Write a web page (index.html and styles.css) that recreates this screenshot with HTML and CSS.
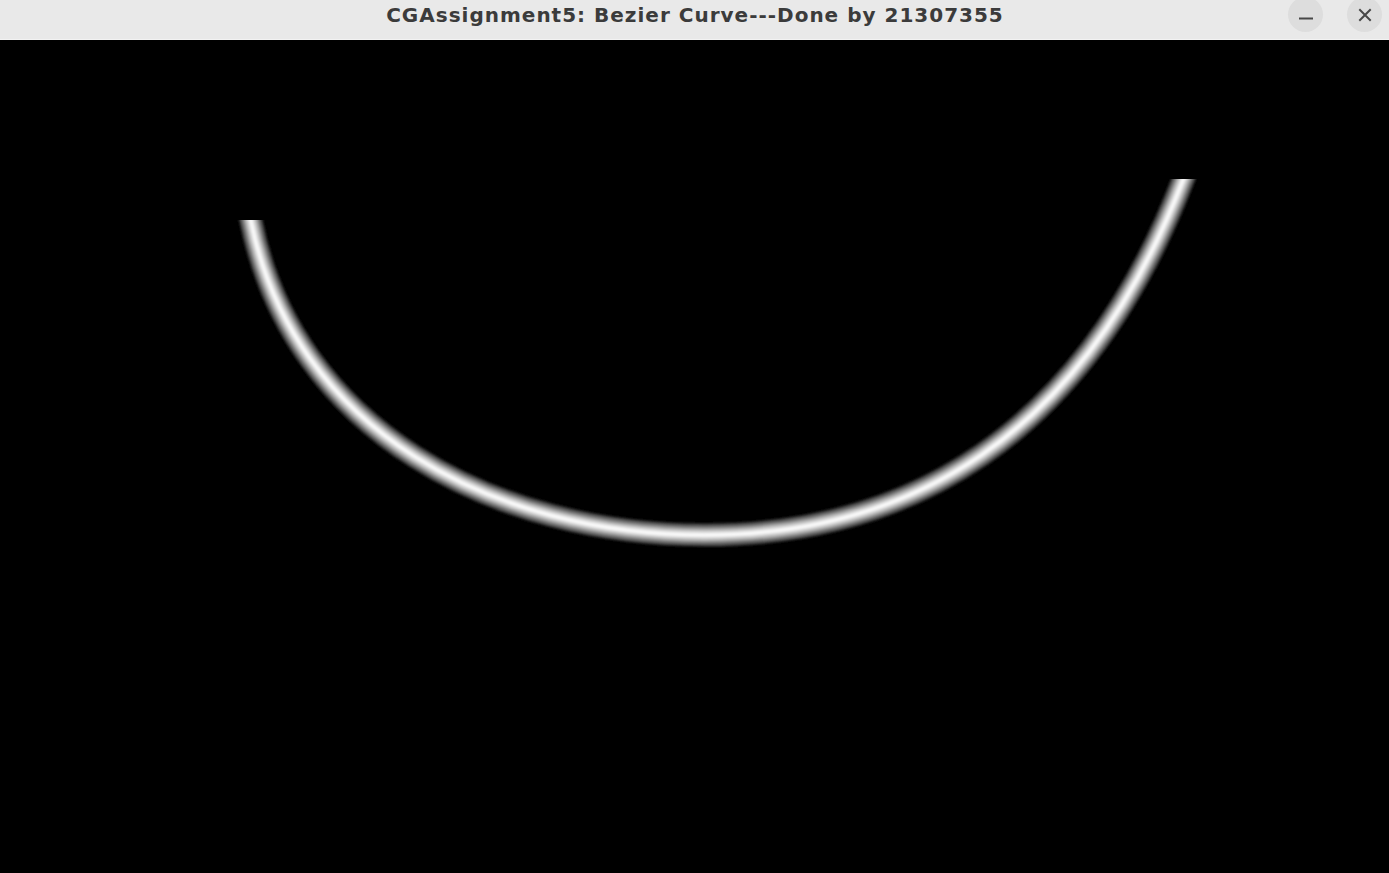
FILE: index.html
```html
<!DOCTYPE html>
<html lang="en">
<head>
<meta charset="utf-8">
<title>CGAssignment5: Bezier Curve---Done by 21307355</title>
<link rel="stylesheet" href="styles.css">
</head>
<body>
<div class="window">
  <header class="titlebar">
    <div class="title">CGAssignment5: Bezier Curve---Done by 21307355</div>
    <div class="controls">
      <button class="ctl" aria-label="Minimize">
        <svg width="14" height="14" viewBox="0 0 14 14"><path class="glyph" d="M1 10.5 H13"/></svg>
      </button>
      <button class="ctl" aria-label="Close">
        <svg width="14" height="14" viewBox="0 0 14 14"><path class="glyph" d="M2 2 L12 12 M12 2 L2 12"/></svg>
      </button>
    </div>
  </header>
  <main class="canvas">
    <svg class="scene" viewBox="0 41 1389 832" width="1389" height="832">
      <defs>
        <path id="curve" d="M 248 207.3 L 251 222 C 293 432 495 536 705 536 C 905 536 1083 441 1183 181 L 1188.4 167"/>
        <clipPath id="ends">
          <polygon points="0,221 700,221 700,180 1389,180 1389,873 0,873"/>
        </clipPath>
        <filter id="soft" x="-5%" y="-5%" width="110%" height="110%">
          <feGaussianBlur stdDeviation="0.8"/>
        </filter>
      </defs>
      <g clip-path="url(#ends)">
        <g class="tube" filter="url(#soft)">
          <use href="#curve" class="l1"/>
          <use href="#curve" class="l2"/>
          <use href="#curve" class="l3"/>
          <use href="#curve" class="l4"/>
          <use href="#curve" class="l5"/>
          <use href="#curve" class="l6"/>
          <use href="#curve" class="l7"/>
          <use href="#curve" class="l8"/>
          <use href="#curve" class="l9"/>
          <use href="#curve" class="l10"/>
          <use href="#curve" class="l11"/>
        </g>
      </g>
    </svg>
  </main>
</div>
</body>
</html>
```

FILE: styles.css
```css
html, body {
  margin: 0;
  padding: 0;
  background: #000;
  overflow: hidden;
}

.window {
  width: 1389px;
  height: 873px;
  display: flex;
  flex-direction: column;
}

.titlebar {
  height: 40px;
  flex: 0 0 40px;
  box-sizing: border-box;
  background: #e9e9e9;
  border-bottom: 1px solid #f3f3f3;
  display: flex;
  align-items: center;
  justify-content: center;
  position: relative;
}

.title {
  font-family: "DejaVu Sans", "Open Sans", sans-serif;
  font-weight: 700;
  font-size: 20px;
  letter-spacing: 1px;
  color: #3b3b3b;
  margin-top: -9px;
  margin-left: 1px;
}

.controls {
  position: absolute;
  right: 7px;
  top: -3px;
  display: flex;
  gap: 24px;
}

.ctl {
  width: 35px;
  height: 35px;
  border-radius: 50%;
  border: none;
  padding: 0;
  background: #dddddd;
  display: flex;
  align-items: center;
  justify-content: center;
}

.glyph {
  fill: none;
  stroke: #474747;
  stroke-width: 2;
  stroke-linecap: square;
}

.canvas {
  flex: 1;
  background: #000;
}

.scene {
  display: block;
}

#curve {
  fill: none;
  stroke-linecap: butt;
  stroke-linejoin: round;
}

.l1  { stroke: #242424; stroke-width: 24px; }
.l2  { stroke: #3a3a3a; stroke-width: 22px; }
.l3  { stroke: #505050; stroke-width: 20px; }
.l4  { stroke: #666666; stroke-width: 18px; }
.l5  { stroke: #7c7c7c; stroke-width: 16px; }
.l6  { stroke: #929292; stroke-width: 14px; }
.l7  { stroke: #a8a8a8; stroke-width: 12px; }
.l8  { stroke: #bebebe; stroke-width: 10px; }
.l9  { stroke: #d4d4d4; stroke-width: 7.5px; }
.l10 { stroke: #e9e9e9; stroke-width: 5px; }
.l11 { stroke: #fbfbfb; stroke-width: 2.5px; }
```
